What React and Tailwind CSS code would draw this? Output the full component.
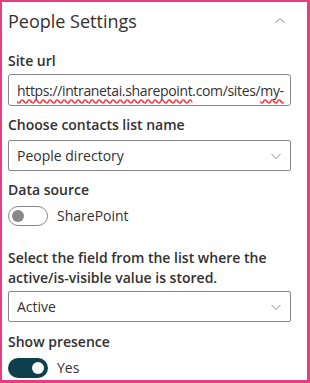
import { useState } from 'react';

function Chevron({ up }) {
    return (
        <svg width="12" height="12" viewBox="0 0 12 12" className="text-[#8a8886]">
            <path d={up ? "M1.5 8 L6 3.5 L10.5 8" : "M1.5 4 L6 8.5 L10.5 4"} fill="none" stroke="currentColor" strokeWidth="1" />
        </svg>
    );
}

function Dropdown({ value }) {
    return (
        <div className="h-[31px] border border-[#8a8886] rounded-[2px] flex items-center justify-between pl-[8px] pr-[8px] text-[14px] text-[#323130]">
            <span>{value}</span>
            <Chevron />
        </div>
    );
}

function Toggle({ on, label }) {
    return (
        <div className="flex items-center gap-[9px] mt-[5px]">
            {on ? (
                <div className="w-[40px] h-[20px] rounded-full bg-[#0e3f4c] flex items-center justify-end pr-[4px]">
                    <div className="w-[12px] h-[12px] rounded-full bg-white" />
                </div>
            ) : (
                <div className="w-[40px] h-[20px] rounded-full border border-[#8a8886] flex items-center pl-[3px]">
                    <div className="w-[12px] h-[12px] rounded-full bg-[#8a8886]" />
                </div>
            )}
            <span className="text-[14px] text-[#323130]">{label}</span>
        </div>
    );
}

export default function App() {
    const [open] = useState(true);
    return (
        <div className="w-[310px] h-[383px] bg-white border-[#e63e82] border-l-[2px] border-t-[2px] border-r-[3px] border-b-[3px] overflow-hidden" style={{ fontFamily: '"Open Sans", "Noto Sans", sans-serif' }}>
            <div className="pl-[6px] pr-[16px]">
                <div className="flex items-center justify-between h-[36px] pt-[2px] pr-[5px]">
                    <span className="text-[18px] text-[#323130]">People Settings</span>
                    <Chevron up={open} />
                </div>

                <div className="mt-[13px] text-[14px] leading-[20px] font-semibold text-[#323130]">Site url</div>
                <div className="mt-[3px] h-[32px] border border-[#8a8886] rounded-[3px] flex items-center px-[8px] text-[14px] text-[#323130] whitespace-nowrap overflow-hidden tracking-[-0.35px]">
                    <span className="underline decoration-wavy decoration-red-500 underline-offset-[3px]">https://intranetai.sharepoint</span>
                    <span>.com/sites/</span>
                    <span className="underline decoration-wavy decoration-red-500 underline-offset-[3px]">my-</span>
                </div>

                <div className="mt-[9px] text-[14px] leading-[20px] font-semibold text-[#323130]">Choose contacts list name</div>
                <div className="mt-[5px]">
                    <Dropdown value="People directory" />
                </div>

                <div className="mt-[9px] text-[14px] leading-[20px] font-semibold text-[#323130]">Data source</div>
                <Toggle on={false} label="SharePoint" />

                <div className="mt-[22px] text-[14px] font-semibold text-[#323130] leading-[20px]">
                    Select the field from the list where the active/is-visible value is stored.
                </div>
                <div className="mt-[3px]">
                    <Dropdown value="Active" />
                </div>

                <div className="mt-[10px] text-[14px] leading-[20px] font-semibold text-[#323130]">Show presence</div>
                <Toggle on={true} label="Yes" />
            </div>
        </div>
    );
}
